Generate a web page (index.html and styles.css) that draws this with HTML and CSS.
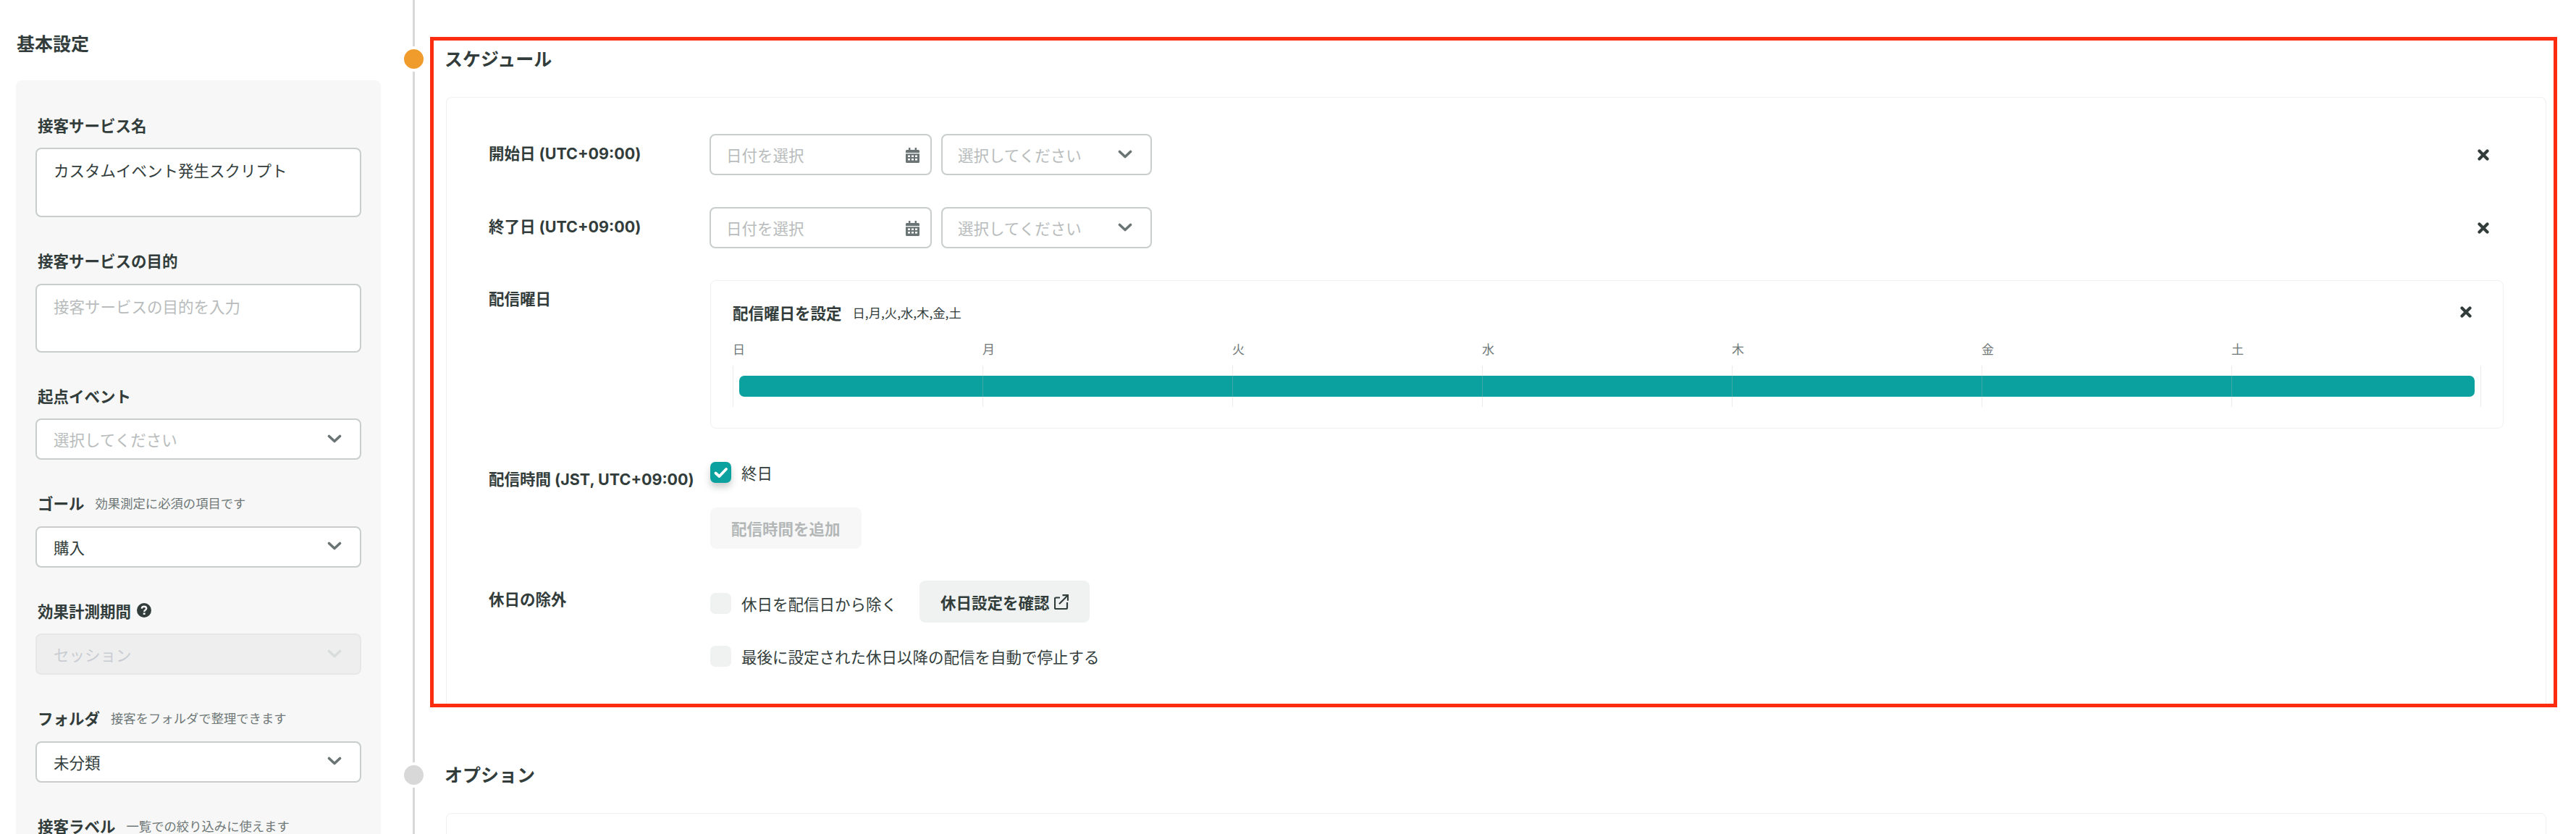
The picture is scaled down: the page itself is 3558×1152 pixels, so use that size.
FILE: index.html
```html
<!DOCTYPE html>
<html lang="ja">
<head>
    <meta charset="UTF-8">
    <title>接客サービス設定</title>
    <link rel="stylesheet" href="styles.css">
</head>
<body>
    <svg class="icon-defs" width="0" height="0">
        <symbol id="chevron" viewBox="0 0 20 12"><path d="M2.500 2.500L10 9.500L17.500 2.500" fill="none" stroke="currentColor" stroke-width="3.600" stroke-linecap="round" stroke-linejoin="round"/></symbol>
        <symbol id="close" viewBox="0 0 16 16"><path d="M2.500 2.500L13.500 13.500M13.500 2.500L2.500 13.500" fill="none" stroke="currentColor" stroke-width="4.200" stroke-linecap="round"/></symbol>
        <symbol id="calendar" viewBox="0 0 19 21"><path fill="currentColor" fill-rule="evenodd" d="M4 0h2.400v3H12.600V0H15v3h2.500A1.500 1.500 0 0 1 19 4.500V7H0V4.500A1.500 1.500 0 0 1 1.500 3H4zM0 8.200h19V19.500A1.500 1.500 0 0 1 17.500 21H1.500A1.500 1.500 0 0 1 0 19.500zM3 10.500v2.500h3v-2.500zM8 10.500v2.500h3v-2.500zM13 10.500v2.500h3v-2.500zM3 15v2.500h3V15zM8 15v2.500h3V15zM13 15v2.500h3V15z"/></symbol>
    </svg>

    <aside class="sidebar">
        <h2 class="sidebar-title">基本設定</h2>
        <div class="panel">
            <div class="field">
                <div class="field-label"><b>接客サービス名</b></div>
                <div class="control textarea">カスタムイベント発生スクリプト</div>
            </div>
            <div class="field">
                <div class="field-label"><b>接客サービスの目的</b></div>
                <div class="control textarea purpose placeholder">接客サービスの目的を入力</div>
            </div>
            <div class="field">
                <div class="field-label"><b>起点イベント</b></div>
                <div class="control select placeholder">選択してください<svg class="chevron"><use href="#chevron"/></svg></div>
            </div>
            <div class="field">
                <div class="field-label"><b>ゴール</b><span>効果測定に必須の項目です</span></div>
                <div class="control select">購入<svg class="chevron"><use href="#chevron"/></svg></div>
            </div>
            <div class="field">
                <div class="field-label"><b>効果計測期間</b>
                    <svg class="help-icon" viewBox="0 0 20 20"><circle cx="10" cy="10" r="10" fill="currentColor"/><path d="M6.800 7.600C6.900 5.700 8.300 4.800 10 4.800C11.800 4.800 13.200 5.900 13.200 7.500C13.200 9.600 10.200 9.700 10.200 12" fill="none" stroke="#f7f7f7" stroke-width="2.400"/><rect x="8.800" y="13.400" width="2.800" height="2.600" fill="#f7f7f7"/></svg>
                </div>
                <div class="control select disabled">セッション<svg class="chevron"><use href="#chevron"/></svg></div>
            </div>
            <div class="field">
                <div class="field-label"><b>フォルダ</b><span>接客をフォルダで整理できます</span></div>
                <div class="control select">未分類<svg class="chevron"><use href="#chevron"/></svg></div>
            </div>
            <div class="field">
                <div class="field-label"><b>接客ラベル</b><span>一覧での絞り込みに使えます</span></div>
            </div>
        </div>
    </aside>

    <main class="timeline">
        <section class="section section-active">
            <span class="dot dot-active"></span>
            <h2 class="section-title">スケジュール</h2>
            <div class="card">
                <div class="form-row">
                    <div class="row-label">開始日 (UTC+09:00)</div>
                    <div class="control date placeholder">日付を選択<svg class="calendar"><use href="#calendar"/></svg></div>
                    <div class="control select time placeholder">選択してください<svg class="chevron"><use href="#chevron"/></svg></div>
                    <svg class="close row-close"><use href="#close"/></svg>
                </div>
                <div class="form-row">
                    <div class="row-label">終了日 (UTC+09:00)</div>
                    <div class="control date placeholder">日付を選択<svg class="calendar"><use href="#calendar"/></svg></div>
                    <div class="control select time placeholder">選択してください<svg class="chevron"><use href="#chevron"/></svg></div>
                    <svg class="close row-close"><use href="#close"/></svg>
                </div>
                <div class="form-row">
                    <div class="row-label">配信曜日</div>
                    <div class="week-card">
                        <div class="week-head">
                            <b>配信曜日を設定</b>
                            <span>日,月,火,水,木,金,土</span>
                            <svg class="close week-close"><use href="#close"/></svg>
                        </div>
                        <div class="week-labels">
                            <span>日</span><span>月</span><span>火</span><span>水</span><span>木</span><span>金</span><span>土</span>
                        </div>
                        <div class="week-track">
                            <div class="week-bar"></div>
                            <div class="week-col"></div><div class="week-col"></div><div class="week-col"></div><div class="week-col"></div><div class="week-col"></div><div class="week-col"></div><div class="week-col"></div>
                        </div>
                    </div>
                </div>
                <div class="form-row">
                    <div class="row-label">配信時間 (JST, UTC+09:00)</div>
                    <div class="row-body">
                        <label class="check">
                            <span class="checkbox checked"><svg viewBox="0 0 29 29"><path d="M7.500 15.500L12.500 20L22 10" fill="none" stroke="#fff" stroke-width="3.800" stroke-linecap="round" stroke-linejoin="round"/></svg></span>
                            終日
                        </label>
                        <div class="btn btn-disabled add-time">配信時間を追加</div>
                    </div>
                </div>
                <div class="form-row">
                    <div class="row-label">休日の除外</div>
                    <div class="row-body">
                        <div class="holiday-line">
                            <label class="check"><span class="checkbox"></span>休日を配信日から除く</label>
                            <div class="btn btn-holiday">休日設定を確認
                                <svg class="external" viewBox="0 0 20 21"><path d="M8 4.500H2.500A1.500 1.500 0 0 0 1 6V18.500A1.500 1.500 0 0 0 2.500 20H16.500A1.500 1.500 0 0 0 18 18.500V11M11.500 1.200H19V8.700M19 1.200L7 13.200" fill="none" stroke="currentColor" stroke-width="2.200"/></svg>
                            </div>
                        </div>
                        <label class="check stop-check"><span class="checkbox"></span>最後に設定された休日以降の配信を自動で停止する</label>
                    </div>
                </div>
            </div>
        </section>

        <section class="section section-next">
            <span class="dot"></span>
            <h2 class="section-title">オプション</h2>
            <div class="card card-empty"></div>
        </section>
    </main>
</body>
</html>
```

FILE: styles.css
```css
* {
    box-sizing: border-box;
}
html, body {
    height: 100%;
    overflow: hidden;
}
body {
    display: flex;
    margin: 0;
    background-color: #fff;
    color: #323d3b;
    font-family: "Noto Sans CJK JP", "Noto Sans", sans-serif;
    font-size: 21.5px;
}
.icon-defs {
    position: absolute;
}

/* left column */
.sidebar {
    flex: none;
    width: 526px;
    padding-left: 22px;
}
.sidebar-title {
    height: 111px;
    margin: 0;
    padding: 42px 0 0 1px;
    font-size: 25px;
    line-height: 34px;
}
.panel {
    padding: 46px 27px 0;
    border-radius: 8px;
    background-color: #f7f7f7;
}
.field {
    margin-bottom: 44.5px;
}
.field-label {
    display: flex;
    align-items: center;
    height: 32px;
    margin-bottom: 15px;
    padding: 0 0 2px 3px;
}
.field-label span {
    margin-left: 15px;
    color: #6f7777;
    font-size: 17.33px;
    font-weight: 400;
}
.help-icon {
    width: 20px;
    height: 20px;
    margin-left: 8px;
}

/* inputs */
.control {
    position: relative;
    display: flex;
    align-items: center;
    height: 57px;
    padding: 0 21px;
    border: 2px solid #c9cdcd;
    border-radius: 8px;
    background-color: #fff;
}
.sidebar .control {
    padding: 0 23px;
}
.sidebar .textarea {
    align-items: flex-start;
    height: 96px;
    padding-top: 13px;
    line-height: 32px;
}
.sidebar .purpose {
    height: 95px;
    margin-top: 1px;
}
.placeholder {
    color: #b8bcbc;
}
.disabled {
    border-color: #e6e8e8;
    background-color: #eee;
    color: #c8ccd2;
}
.chevron, .calendar {
    position: absolute;
    top: 50%;
    color: #6b7474;
}
.chevron {
    right: 25px;
    width: 20px;
    height: 12px;
    margin-top: -7px;
}
.disabled .chevron {
    color: #d9dcdc;
}
.calendar {
    right: 15px;
    width: 19px;
    height: 21px;
    margin-top: -10px;
}
.date {
    flex: none;
    width: 307px;
    margin-left: -1px;
}
.time {
    flex: none;
    width: 291px;
    margin-left: 13px;
}

/* timeline */
.timeline {
    flex: 1;
    min-width: 0;
    margin-left: 44px;
    padding: 51px 26px 0 21px;
    border-left: 3px solid #d8d8d8;
}
.section {
    position: relative;
    padding: 0 10px 0 17px;
    border: 5px solid transparent;
}
.section-active {
    border-color: #fc2c10;
}
.section-next {
    margin-top: 63px;
}
.section-title {
    height: 48px;
    margin: 0 0 30px -2px;
    font-size: 25px;
    line-height: 48px;
}
.dot {
    position: absolute;
    top: 12px;
    left: -41px;
    width: 27px;
    height: 27px;
    border-radius: 50%;
    background-color: #d8d8d8;
    box-shadow: 0 0 0 4px #fff;
}
.dot-active {
    background-color: #f09c2c;
}
.card {
    padding: 50px 58px;
    border: 1px solid #f0f0f0;
    border-bottom: 0;
    border-radius: 8px 8px 0 0;
}
.card-empty {
    height: 300px;
}

/* form rows */
.form-row {
    display: flex;
    margin-bottom: 44px;
}
.form-row:last-child {
    margin-bottom: 0;
}
.form-row:nth-child(-n+2) {
    align-items: center;
}
.row-label {
    flex: none;
    width: 306px;
    padding-top: 10px;
    font-family: Inter, "Noto Sans CJK JP", sans-serif;
    font-weight: 700;
    line-height: 32px;
}
.form-row:nth-child(-n+2) .row-label {
    padding: 0 0 3px;
}
.close {
    width: 16px;
    height: 16px;
}
.row-close {
    margin-left: auto;
    margin-right: 20px;
}

/* weekday card */
.week-card {
    flex: 1;
    height: 205px;
    padding: 27px 0 0 30px;
    border: 1px solid #f0f0f0;
    border-radius: 8px;
}
.week-head {
    display: flex;
    align-items: center;
    height: 32px;
    margin-bottom: 23px;
}
.week-head span {
    margin-left: 15px;
    font-size: 17.33px;
}
.week-close {
    margin-left: auto;
    margin-right: 43px;
}
.week-labels {
    display: grid;
    grid-template-columns: repeat(7, 345px);
    height: 24px;
    margin-bottom: 11px;
    color: #6f7777;
    font-size: 17px;
    line-height: 24px;
}
.week-track {
    position: relative;
    display: grid;
    grid-template-columns: repeat(7, 345px);
    width: 2416px;
    height: 57px;
}
.week-bar {
    position: absolute;
    top: 14px;
    left: 9px;
    width: 2397px;
    height: 29px;
    border-radius: 7px;
    background-color: #0ba19f;
}
.week-col {
    position: relative;
    border-left: 1px solid rgba(190, 190, 190, 0.3);
}
.week-col:last-child {
    border-right: 1px solid rgba(190, 190, 190, 0.3);
}

/* checks and buttons */
.row-body {
    flex: 1;
    min-width: 0;
}
.check {
    display: flex;
    align-items: center;
    gap: 14px;
    height: 32px;
}
.checkbox {
    flex: none;
    width: 29px;
    height: 29px;
    margin-top: 1px;
    border-radius: 7px;
    background-color: #f0f1f1;
}
.checked {
    background-color: #0ba19f;
    box-shadow: 0 6px 10px rgba(50, 61, 59, 0.25);
}
.checked svg {
    display: block;
}
.btn {
    display: inline-flex;
    align-items: center;
    height: 57px;
    padding: 0 29px;
    border-radius: 8px;
    font-weight: 700;
}
.btn-disabled {
    background-color: #f7f7f7;
    color: #b4b7b7;
}
.add-time {
    margin-top: 33px;
}
.holiday-line {
    display: flex;
    align-items: flex-start;
}
.holiday-line .check {
    margin-top: 15px;
}
.btn-holiday {
    height: 58px;
    margin-left: 31px;
    background-color: #f0f2f2;
}
.external {
    width: 20px;
    height: 21px;
    margin-left: 6px;
}
.stop-check {
    margin-top: 30px;
}
```
